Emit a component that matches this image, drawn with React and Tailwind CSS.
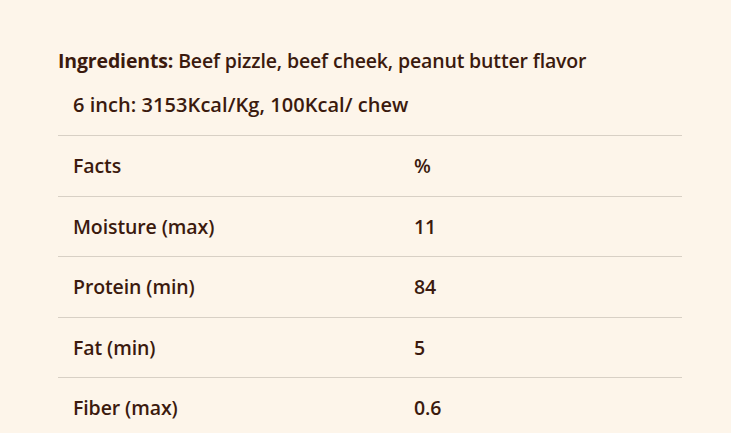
export default function App() {
  const rows = [
    ["Moisture (max)", "11"],
    ["Protein (min)", "84"],
    ["Fat (min)", "5"],
    ["Fiber (max)", "0.6"],
  ];
  return (
    <div className="w-[731px] h-[433px] overflow-hidden bg-[#fdf5ea] text-[#3b1a0e] font-['Open_Sans',sans-serif] font-semibold">
      <div className="pl-[58px] pr-[49px] pt-[47px]">
        <p className="text-[19.5px] leading-[28px] tracking-[-0.15px]">
          <span className="font-bold">Ingredients:</span> Beef pizzle, beef cheek, peanut butter flavor
        </p>
        <p className="mt-[16px] pl-[15px] text-[20px] leading-[28px] tracking-[0.05px]">
          6 inch: 3153Kcal/Kg, 100Kcal/ chew
        </p>
        <div className="mt-[16px] text-[19.5px] tracking-[-0.1px]">
          <div className="grid grid-cols-[341px_1fr] border-t border-[#d8d0c5] h-[60.5px] items-center">
            <div className="pl-[15px]">Facts</div>
            <div className="pl-[15px]">%</div>
          </div>
          {rows.map(([a, b]) => (
            <div key={a} className="grid grid-cols-[341px_1fr] border-t border-[#d8d0c5] h-[60.5px] items-center">
              <div className="pl-[15px]">{a}</div>
              <div className="pl-[15px]">{b}</div>
            </div>
          ))}
        </div>
      </div>
    </div>
  );
}
